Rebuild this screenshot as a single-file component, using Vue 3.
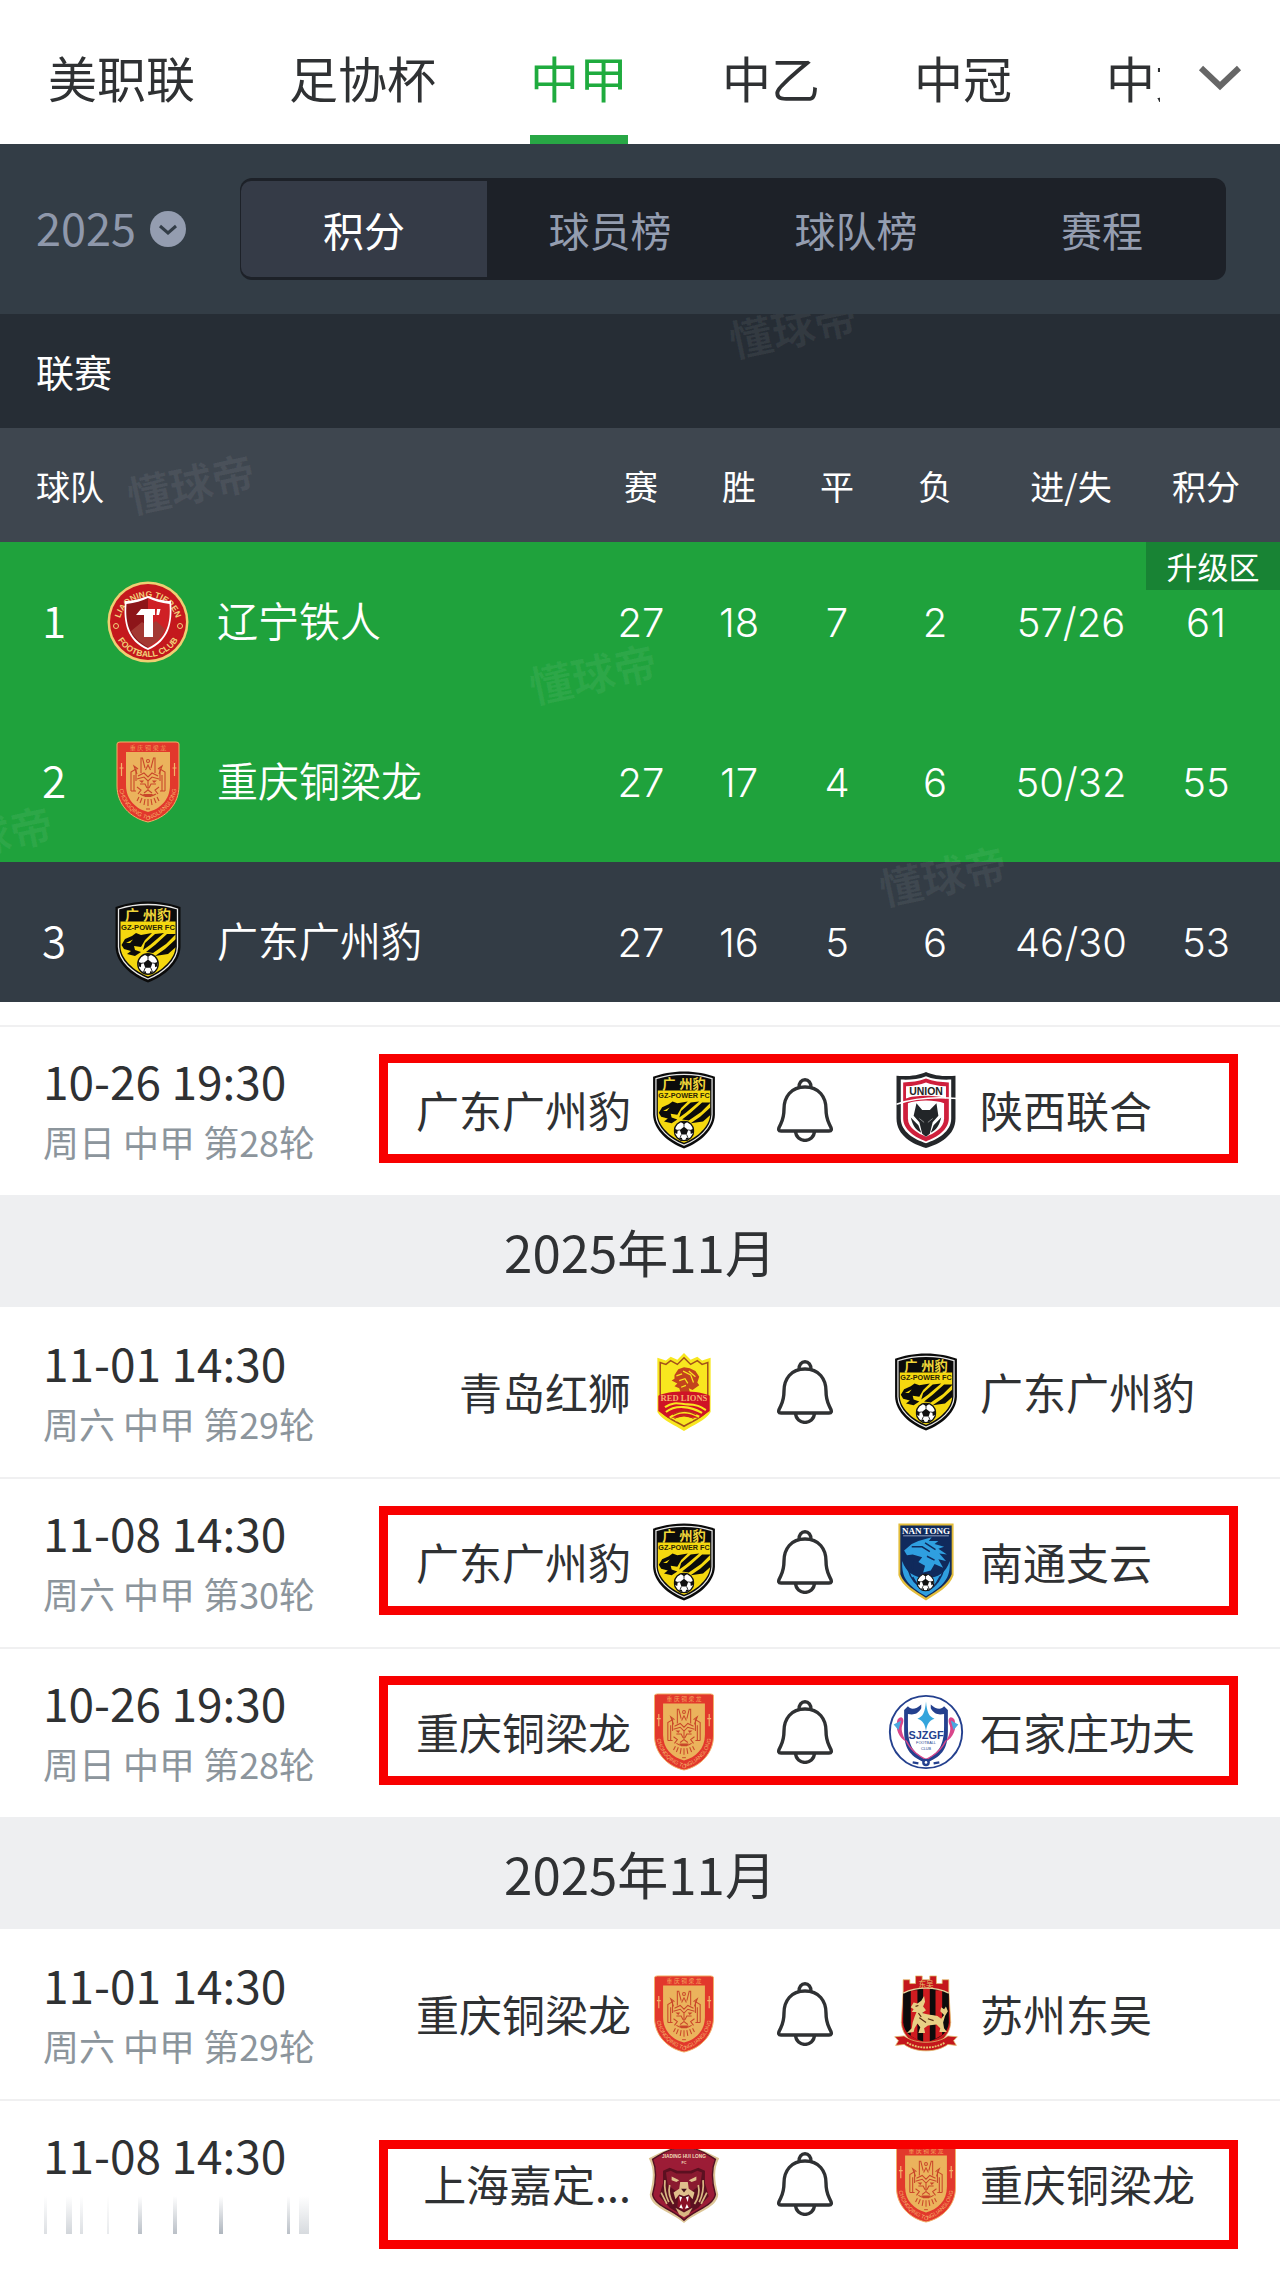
<script setup>
import { ref } from 'vue';

const leagues = ['美职联', '足协杯', '中甲', '中乙', '中冠', '中女'];
const activeLeague = ref('中甲');

const sections = ['积分', '球员榜', '球队榜', '赛程'];
const activeSection = ref('积分');

const season = ref('2025');

const standings = [
  { rank: 1, crest: 'liaoning', name: '辽宁铁人', played: 27, won: 18, drawn: 7, lost: 2, goals: '57/26', points: 61, promoted: true },
  { rank: 2, crest: 'chongqing', name: '重庆铜梁龙', played: 27, won: 17, drawn: 4, lost: 6, goals: '50/32', points: 55, promoted: true },
  { rank: 3, crest: 'guangzhou', name: '广东广州豹', played: 27, won: 16, drawn: 5, lost: 6, goals: '46/30', points: 53, promoted: false }
];

const groups = [
  {
    id: 'gz-10',
    matches: [
      { time: '10-26 19:30', info: '周日 中甲 第28轮', home: '广东广州豹', homeCrest: 'guangzhou', away: '陕西联合', awayCrest: 'shaanxi', marked: true }
    ]
  },
  {
    id: 'gz-11',
    month: '2025年11月',
    matches: [
      { time: '11-01 14:30', info: '周六 中甲 第29轮', home: '青岛红狮', homeCrest: 'qingdao', away: '广东广州豹', awayCrest: 'guangzhou' },
      { time: '11-08 14:30', info: '周六 中甲 第30轮', home: '广东广州豹', homeCrest: 'guangzhou', away: '南通支云', awayCrest: 'nantong', marked: true },
      { time: '10-26 19:30', info: '周日 中甲 第28轮', home: '重庆铜梁龙', homeCrest: 'chongqing', away: '石家庄功夫', awayCrest: 'shijiazhuang', marked: true }
    ]
  },
  {
    id: 'cq-11',
    month: '2025年11月',
    matches: [
      { time: '11-01 14:30', info: '周六 中甲 第29轮', home: '重庆铜梁龙', homeCrest: 'chongqing', away: '苏州东吴', awayCrest: 'suzhou' },
      { time: '11-08 14:30', info: '', home: '上海嘉定...', homeCrest: 'shanghai', away: '重庆铜梁龙', awayCrest: 'chongqing', marked: true, low: true }
    ]
  }
];

// streaks shown where the round info fades out
const streaks = [
  { x: 1, w: 3, o: 0.3 },
  { x: 23, w: 6, o: 0.4 },
  { x: 37, w: 3, o: 0.3 },
  { x: 64, w: 2, o: 0.2 },
  { x: 95, w: 4, o: 0.6 },
  { x: 130, w: 4, o: 0.6 },
  { x: 176, w: 4, o: 0.7 },
  { x: 244, w: 3, o: 0.6 },
  { x: 256, w: 10, o: 0.35 }
];
</script>

<template>
  <div class="page">
    <!-- Crest sprite -->
    <svg class="sprite" aria-hidden="true">
      <defs>
        <path id="arc-top" d="M12 45 A29 29 0 0 1 70 45" />
        <path id="arc-bottom" d="M6 41 A35 35 0 0 0 76 41" />
        <path id="arc-shield" d="M12 46 C15 66 28 74 41 79 C54 74 67 66 70 46" />
      </defs>

      <symbol id="ball" viewBox="0 0 20 20">
        <circle cx="10" cy="10" r="9.3" fill="#fff" stroke="#111" stroke-width="1.2" />
        <path d="M10 6 L14 9 L12.5 13.5 H7.5 L6 9Z M7 1.5 L10 3.5 L13 1.5 Q10 0 7 1.5Z M1 8 L4 9 L3.5 13 L1.5 12Z M19 8 L16 9 L16.5 13 L18.5 12Z M5 17 L8 16.5 L8.5 19Z M15 17 L12 16.5 L11.5 19Z" fill="#111" />
        <path d="M10 6 V3 M6 9 L3.5 9.5 M14 9 L16.5 9.5 M7.5 13.5 L6 17 M12.5 13.5 L14 17" stroke="#111" stroke-width="0.8" />
      </symbol>

      <symbol id="crest-liaoning" viewBox="0 0 82 82">
        <circle cx="41" cy="41" r="40.5" fill="#efcf72" />
        <circle cx="41" cy="41" r="38" fill="#c4181d" />
        <text class="crest-text" font-size="8.5" font-weight="700" fill="#f1d27a"><textPath href="#arc-top" startOffset="50%" text-anchor="middle">LIAONING TIEREN</textPath></text>
        <text class="crest-text" font-size="8.5" font-weight="700" fill="#f1d27a"><textPath href="#arc-bottom" startOffset="50%" text-anchor="middle">FOOTBALL CLUB</textPath></text>
        <circle cx="9" cy="45" r="2.5" fill="none" stroke="#f1d27a" />
        <circle cx="73" cy="45" r="2.5" fill="none" stroke="#f1d27a" />
        <path d="M41 15 C49 18 58 20 64 20 C66 42 62 60 41 69 C20 60 16 42 18 20 C24 20 33 18 41 15Z" fill="#fff" />
        <path d="M41 17 V67 C22 58 18 42 19.5 23 C28 22 35 20 41 17Z" fill="#8d1519" />
        <path d="M41 17 V67 C60 58 64 42 62.5 23 C54 22 47 20 41 17Z" fill="#cf2025" />
        <path d="M24 50 L35 41 L41 45 L49 40 L58 48 C54 58 48 62 41 66 C33 62 28 57 24 50Z" fill="#a43833" />
        <path d="M29 34 L34 28 H48 V34 H46 V56 H37 V34 H29Z M50 28 H53.5 L52 34 H49.5Z" fill="#fff" />
      </symbol>

      <symbol id="crest-chongqing" viewBox="0 0 82 82">
        <path d="M10 3 Q10 1 13 1 H69 Q72 1 72 3 V45 C72 63 59 77 41 81 C23 77 10 63 10 45Z" fill="#e2382c" stroke="#f2b066" stroke-width="1" />
        <path d="M19 11 H63 V44 C63 59 53 68 41 71 C29 68 19 59 19 44Z" fill="#ebb35c" />
        <text class="crest-text" x="41" y="8.5" font-size="6" text-anchor="middle" fill="#f2a35c">重 庆 铜 梁 龙</text>
        <text class="crest-text" font-size="5.8" fill="#f4b26a"><textPath href="#arc-shield" startOffset="50%" text-anchor="middle">CHONGQING TONGLIANGLONG</textPath></text>
        <g fill="none" stroke="#c9472a" stroke-width="1.1">
          <path d="M24 50 V31 L29 28 V40 M27 50 V34 M58 50 V31 L53 28 V40 M55 50 V34 M24 50 H29 M58 50 H53" />
          <path d="M34 32 V17 L35.5 17 L38 27 M48 32 V17 L46.5 17 L44 27 M38.5 29 L41 24 L43.500 29 M30 33 L27 25 L31 28 M52 33 L55 25 L51 28" />
          <path d="M31 35 L37 32 L41 36 L45 32 L51 35 M30 38 L37 36 L41 40 L45 36 L52 38 M33 43 H38 L40 47 M49 43 H44 L42 47 M41 40 V49 L37 52 M41 49 L45 52" />
          <path d="M30 46 L34 49 L31 53 M52 46 L48 49 L51 53 M33 53 C37 56 45 56 49 53 M32 56 L30 60 M35 57 L33 62 M38 58 L37 64 M41 58 V65 M44 58 L45 64 M47 57 L49 62 M50 56 L52 60" />
          <circle cx="41" cy="20" r="1.5" />
        </g>
        <path d="M36 53 H46 L44 56 H38Z M32 39.500 H37 L35 42Z M50 39.500 H45 L47 42Z" fill="#c9472a" />
        <path d="M39 68 H43" stroke="#c9472a" stroke-width="1" />
        <path d="M14.5 22 V35 M12.500 27 H16.500 M67.500 22 V35 M65.500 27 H69.500" stroke="#f4b26a" stroke-width="1.2" />
      </symbol>

      <symbol id="crest-guangzhou" viewBox="0 0 82 82">
        <path d="M41 0.5 C28 0.5 17 3 8.5 6 V46 C9 62 24 75 41 81.5 C58 75 73 62 73.5 46 V6 C65 3 54 0.5 41 0.5Z" fill="#0b0b0b" />
        <path d="M41 3.5 C29 3.5 19 5.5 11.5 8 V46 C12 60 26 72 41 78 C56 72 70 60 70.5 46 V8 C63 5.5 53 3.5 41 3.5Z" fill="none" stroke="#e8e8e8" stroke-width="1.3" />
        <path d="M13.5 20.5 H68.5 V46 C68 58 55 70 41 75.5 C27 70 14 58 13.5 46Z" fill="#f5d80f" />
        <text class="crest-text" x="41" y="18.5" font-size="14" font-weight="700" text-anchor="middle" fill="#f0d63a">广 州豹</text>
        <text class="crest-text" x="41" y="28.5" font-size="7.6" font-weight="700" text-anchor="middle" fill="#2b2505">GZ-POWER FC</text>
        <path d="M14.500 44 L18 38 L25 35 L29 32 L34 34 L45 32 L38 39 L34 46 L27 45 L28 49 L34 51 L28 55 L20 53 L24 50 L17 48Z" fill="#0b0b0b" />
        <path d="M48 33 L57 32 L43 44 L36 49 L38 42Z M60 33 L69 33 L59 43 L46 52 L39 51 L48 44Z M69 38 V46 L61 53 L48 55 L58 48Z" fill="#0b0b0b" />
        <path d="M19 42 L26 38.500 L23 42Z" fill="#f5d80f" />
        <use href="#ball" x="30" y="52" width="22" height="22" />
      </symbol>

      <symbol id="crest-shaanxi" viewBox="0 0 82 82">
        <path d="M41 1 C33 5 20 6 10 5 V50 C10 68 27 77 41 81 C55 77 72 68 72 50 V5 C62 6 49 5 41 1Z" fill="#24272a" />
        <path d="M41 5.5 C33 9 22 9.5 14.500 9 V50 C14.500 64 29 72 41 76 C53 72 67.500 64 67.500 50 V9 C60 9.500 49 9 41 5.5Z" fill="#fff" />
        <path d="M41 8 C34 11 25 12 17 12 V50 C17 62 30 70 41 74 C52 70 65 62 65 50 V12 C57 12 48 11 41 8Z" fill="#cf1f3c" />
        <path d="M20 16 C28 16 35 14 41 12 C47 14 54 16 62 16 V29 C54 25 28 25 20 29Z" fill="#fff" />
        <path d="M22 34 C31 30 51 30 60 34 V50 C60 60 49 66 41 69 C33 66 22 60 22 50Z" fill="#fff" />
        <path d="M10 35 C30 28 50 27 74 29" fill="none" stroke="#fff" stroke-width="1.5" />
        <text class="crest-text" x="41" y="25" font-size="11" font-weight="700" text-anchor="middle" fill="#222">UNION</text>
        <path d="M31 34 L37 41 H45 L52 34 L54 47 L48 54 L45 66 L41 69 L37 66 L34 54 L28 47Z M25 49 L33 57 L36 65 C30 62 27 57 25 49Z M57 49 L49 57 L46 65 C52 62 55 57 57 49Z" fill="#222528" />
        <path d="M34 50 L39 54 M48 50 L43 54" stroke="#8d8f91" stroke-width="1" />
      </symbol>

      <symbol id="crest-qingdao" viewBox="0 0 82 82">
        <path d="M41 0 L48 7 L55 4 L60 8 L69 5 V62 C64 71 50 76 41 82 C32 76 18 71 13 62 V5 L22 8 L27 4 L34 7Z" fill="#f8e71f" />
        <path d="M41 5 L48 12 L55 8 L60 12 L66 10 V60 C61 68 49 72 41 77 C33 72 21 68 16 60 V10 L22 12 L27 8 L34 12Z" fill="none" stroke="#a4521a" stroke-width="1.6" />
        <path d="M31 23 L35 17 L41 15 L47 16 L53 19 L57 25 L55 31 L57 34 L50 39 L46 37 L48 44 L42 41 L38 43 L36 37 L31 35 L34 32 L28 29 L31 27Z" fill="#c3441d" />
        <path d="M33 24 L39 22 M36 29 L42 27 L45 32 M40 19 L48 23 L51 31 M46 19 L53 25 M38 36 L43 34" fill="none" stroke="#f8e71f" stroke-width="1.3" />
        <path d="M14 45 C24 39 58 39 68 45 V61 L58 68 H24 L14 61Z" fill="#cf1326" />
        <text class="crest-text serif" x="41" y="50" font-size="9" font-weight="700" text-anchor="middle" fill="#f7b06e">RED LIONS</text>
        <path d="M21 57 C31 50 37 54 45 54 C55 54 59 57 64 60 M22 62 C32 54 48 56 60 63 M26 68 C36 60 48 62 57 67 M32 71 C38 67 44 67 50 71" fill="none" stroke="#f8e71f" stroke-width="2.2" />
        <path d="M29 65 C37 60 46 60 54 65 M31 69 C38 64 44 64 51 69" fill="none" stroke="#b5361b" stroke-width="1.2" />
      </symbol>

      <symbol id="crest-nantong" viewBox="0 0 82 82">
        <path d="M12 0.5 H70 V55 C66 67 53 74 41 81.5 C29 74 16 67 12 55Z" fill="#e3bd3b" />
        <path d="M14 2.5 H68 V54 C64 65 53 71 41 78.5 C29 71 18 65 14 54Z" fill="#102a5c" />
        <text class="crest-text serif" x="41" y="11.5" font-size="9.5" font-weight="700" text-anchor="middle" fill="#fff">NAN TONG</text>
        <path d="M17 13.5 H65" stroke="#b9c6dd" stroke-width="0.8" />
        <path d="M18 29 L26 22 L33 19 L47 15 L44 19 L54 19 L50 22 L60 25 L54 27 L63 33 L55 32 L62 40 L54 38 L59 47 L50 43 L46 50 L38 52 L40 45 L33 41 L37 36 L27 33 L21 34Z" fill="#2f9fe0" />
        <path d="M16 40 C20 52 28 57 41 58 C54 58 62 52 66 40 C67 58 60 66 41 77 C22 66 15 58 16 40Z" fill="#2f9fe0" />
        <path d="M26 25 L37 25 L45 30 M40 21 L51 28 M42 35 L50 39 M22 48 C25 60 32 67 41 71 M60 47 C57 60 50 67 43 71 M28 40 C24 48 29 54 36 56 M47 52 L56 48 M27 57 L33 67 M56 56 L51 65" fill="none" stroke="#102a5c" stroke-width="1.6" />
        <use href="#ball" x="31" y="53" width="19" height="19" />
      </symbol>

      <symbol id="crest-shijiazhuang" viewBox="0 0 82 82">
        <circle cx="41" cy="41" r="38" fill="#fff" stroke="#24408e" stroke-width="2" />
        <path d="M18 18 L22 14 C25 18 31 17 36 12 L36 16 C32 23 27 23 22 22 V35 C22 56 28 63 41 70 C54 63 60 56 60 35 V22 C55 23 50 23 46 16 L46 12 C51 17 57 18 60 14 L64 18 V40 C64 61 56 67 41 74 C26 67 18 61 18 40Z" fill="#24408e" />
        <path d="M41 9 C42 20 44 25 50 27 C44 29 42 33 41 40 C40 33 38 29 32 27 C38 25 40 20 41 9Z" fill="#34a5dc" />
        <path d="M11 28 C16 22 19 28 16 34 C14 40 18 47 20 51 C13 47 8 38 11 28Z M71 28 C66 22 63 28 66 34 C68 40 64 47 62 51 C69 47 74 38 71 28Z" fill="#d9468b" />
        <path d="M7 33 L15 29 L12 39Z M75 33 L67 29 L70 39Z" fill="#4aa8df" />
        <path d="M20 50 C25 61 34 66 41 70 C48 66 57 61 62 50" fill="none" stroke="#d9468b" stroke-width="1.4" />
        <text class="crest-text" x="41" y="48" font-size="11.5" font-weight="700" text-anchor="middle" fill="#24408e">SJZGF</text>
        <text class="crest-text" x="41" y="54" font-size="4" text-anchor="middle" fill="#24408e">FOOTBALL</text>
        <text class="crest-text" x="41" y="60" font-size="4" text-anchor="middle" fill="#24408e">CLUB</text>
        <circle cx="41" cy="73" r="4" fill="#24408e" />
        <path d="M27 73 L33 74 M49 74 L55 73" stroke="#24408e" stroke-width="2.4" />
        <circle cx="41" cy="73" r="1.4" fill="#fff" />
      </symbol>

      <symbol id="crest-suzhou" viewBox="0 0 82 82">
        <path d="M17 17 V5 H24 V9 H30 V1 H37 V5 H45 V1 H52 V9 H58 V5 H65 V17 L67 50 C66 65 54 73 41 79 C28 73 16 65 15 50Z" fill="#c4161c" stroke="#e2c06d" stroke-width="0.8" />
        <path d="M17 19 C31 12 51 12 65 19 V50 C64 63 53 67 41 71 C29 67 18 63 17 50Z" fill="#0d0b0b" />
        <path d="M25 16 H32 V68 L25 64Z M38 14 H45 V71 H38Z M51 16 H58 V63 L51 67Z" fill="#d01c20" />
        <path d="M17 19 C31 12 51 12 65 19" fill="none" stroke="#e8d39b" stroke-width="1.3" />
        <text class="crest-text" x="41" y="13" font-size="8" text-anchor="middle" fill="#e8c56f">东吴</text>
        <path d="M25 34 L28 29 L32 30 L36 27 L39 22 L40 28 L38 33 L41 37 L37 40 C42 42 48 42 53 43 L57 46 L60 42 L56 38 L57 34 L60 36 L62 33 L64 38 L61 43 L59 50 L60 56 L63 60 H55 L56 56 L52 52 L43 53 L39 56 L40 61 H33 L35 55 L32 51 L29 56 L28 60 L21 61 L26 56 L27 50 L29 44 L31 39 L26 39 L28 36Z" fill="#e8cf85" />
        <path d="M30 33 L33 32 M33 40 L36 44 M34 45 L41 50 M43 46 L49 48" stroke="#5a2b12" stroke-width="1.2" />
        <path d="M8 65 L18 64 C30 73 52 73 64 64 L74 65 L70 69 L73 74 L64 73 C52 82 30 82 18 73 L9 74 L12 69Z" fill="#c4161c" stroke="#e2c06d" stroke-width="0.8" />
        <path d="M21 71 C32 78 50 78 61 71" fill="none" stroke="#e8c56f" stroke-width="2" stroke-dasharray="2 1" />
      </symbol>

      <symbol id="crest-shanghai" viewBox="0 0 82 82">
        <path d="M41 1 C32 1 20 6 12 10 L4 14 C10 26 9 36 5 52 C6 66 27 70 41 82 C55 70 76 66 77 52 C73 36 72 26 78 14 L70 10 C62 6 50 1 41 1Z" fill="#dcc596" />
        <path d="M41 2 C32 2 21 7 13 12 L8 15 C13 27 12 38 8 52 C10 64 29 68 41 79 C53 68 72 64 74 52 C70 38 69 27 74 15 L69 12 C61 7 50 2 41 2Z" fill="#9c1c36" stroke="#521022" stroke-width="1.5" />
        <text class="crest-text" x="41" y="14" font-size="5" font-weight="700" text-anchor="middle" fill="#f1dcb9">JIADING HUI LONG</text>
        <text class="crest-text" x="41" y="20" font-size="4" font-weight="700" text-anchor="middle" fill="#f1dcb9">FC</text>
        <path d="M19 27 L26 24 L34 27 H48 L56 24 L63 27 L63 40 L67 54 L56 66 L41 75 L26 66 L15 54 L19 40Z" fill="#5b1020" />
        <path d="M22 29 L27 27 L33 30 H49 L55 27 L60 29 L58 42 L50 48 H32 L24 42Z" fill="#8a1a30" />
        <path d="M28 33 L36 37 L33 39 L28 37Z M54 33 L46 37 L49 39 L54 37Z M37 39 H45 L46 46 L52 50 L50 57 L46 52 L41 54 L36 52 L32 57 L30 50 L36 46Z" fill="#e0c08c" />
        <path d="M21 37 C20 46 21 52 25 60 M26 42 C24 50 26 56 30 62 M61 37 C62 46 61 52 57 60 M56 42 C58 50 56 56 52 62 M17 50 L23 62 M65 50 L59 62" fill="none" stroke="#d9b783" stroke-width="1.8" />
        <path d="M35 54 L41 56 L47 54 L48 65 L41 69 L34 65Z" fill="#8a1027" />
        <path d="M38 46 H44 L41 50Z" fill="#42101b" />
        <path d="M36 54 L37 60 L39 55Z M46 54 L45 60 L43 55Z M36 66 L38 62 L40 67Z M46 66 L44 62 L42 67Z" fill="#fff" />
        <path d="M32 66 L41 71 L50 66 L46 73 L41 76 L36 73Z" fill="#d9b783" />
      </symbol>

      <symbol id="icon-bell" viewBox="0 0 56 64">
        <g fill="none" stroke="#2f3133" stroke-width="3.4" stroke-linejoin="round">
          <path d="M28 9 C14 9 7 19 7 31 C7 41 5 43 2.5 48.5 C1 51.5 1.5 53 4 53 H52 C54.5 53 55 51.5 53.5 48.5 C51 43 49 41 49 31 C49 19 42 9 28 9Z" />
          <path d="M22 10 C21 -1 35 -1 34 10" />
          <path d="M18.5 53 C19 65.5 37 65.5 37.5 53" />
        </g>
      </symbol>
    </svg>

    <nav class="league-nav">
      <div class="league-tabs">
        <button
          v-for="league in leagues"
          :key="league"
          type="button"
          class="league-tab"
          :class="{ 'is-active': league === activeLeague }"
          @click="activeLeague = league"
        >{{ league }}</button>
      </div>
      <button type="button" class="more-button" aria-label="更多">
        <svg width="44" height="28" viewBox="0 0 44 28" fill="none" stroke="#666" stroke-width="6">
          <path d="M3 4 L22 22 L41 4" />
        </svg>
      </button>
    </nav>

    <div class="filter-bar">
      <label class="season">
        <select v-model="season" aria-label="赛季">
          <option>2025</option>
        </select>
        <svg width="36" height="36" viewBox="0 0 36 36">
          <circle cx="18" cy="18" r="18" fill="#949db0" />
          <path d="M10 15 L18 22 L26 15" fill="none" stroke="#333d47" stroke-width="3" />
        </svg>
      </label>
      <div class="segments">
        <button
          v-for="section in sections"
          :key="section"
          type="button"
          class="segment"
          :class="{ 'is-active': section === activeSection }"
          @click="activeSection = section"
        >{{ section }}</button>
      </div>
    </div>

    <section class="standings">
      <h2 class="stage">联赛</h2>
      <table class="table">
        <colgroup>
          <col>
          <col class="col-num">
          <col class="col-num">
          <col class="col-num">
          <col class="col-num">
          <col class="col-goals">
          <col class="col-points">
        </colgroup>
        <thead>
          <tr>
            <th class="team-head">球队</th>
            <th>赛</th>
            <th>胜</th>
            <th>平</th>
            <th>负</th>
            <th>进/失</th>
            <th class="points">积分</th>
          </tr>
        </thead>
        <tbody>
          <tr v-for="row in standings" :key="row.rank" :class="{ promoted: row.promoted }">
            <td>
              <div class="team">
                <span class="rank">{{ row.rank }}</span>
                <svg class="team-crest"><use :href="'#crest-' + row.crest" /></svg>
                <span class="team-name">{{ row.name }}</span>
              </div>
            </td>
            <td>{{ row.played }}</td>
            <td>{{ row.won }}</td>
            <td>{{ row.drawn }}</td>
            <td>{{ row.lost }}</td>
            <td>{{ row.goals }}</td>
            <td class="points">{{ row.points }}</td>
          </tr>
        </tbody>
      </table>
      <span class="zone-tag">升级区</span>
      <div class="watermarks" aria-hidden="true">
        <span class="mark-a">懂球帝</span>
        <span class="mark-b">懂球帝</span>
        <span class="mark-c">懂球帝</span>
        <span class="mark-d">懂球帝</span>
        <span class="mark-e">懂球帝</span>
      </div>
    </section>

    <main class="schedule">
      <section v-for="group in groups" :key="group.id">
        <h3 v-if="group.month" class="month">{{ group.month }}</h3>
        <div v-for="match in group.matches" :key="match.time + match.home" class="match">
          <div class="kickoff">
            <div class="time">{{ match.time }}</div>
            <div v-if="match.info" class="info">{{ match.info }}</div>
            <svg v-else class="streaks" width="270" height="38">
              <linearGradient id="streak" x1="0" y1="0" x2="0" y2="1">
                <stop offset="0" stop-color="#8c96a2" stop-opacity="0" />
                <stop offset="1" stop-color="#8c96a2" />
              </linearGradient>
              <rect v-for="s in streaks" :key="s.x" :x="s.x" y="0" :width="s.w" height="38" fill="url(#streak)" :opacity="s.o" />
            </svg>
          </div>
          <span class="home">{{ match.home }}</span>
          <svg class="crest"><use :href="'#crest-' + match.homeCrest" /></svg>
          <button type="button" class="bell" aria-label="提醒">
            <svg width="56" height="64"><use href="#icon-bell" /></svg>
          </button>
          <svg class="crest"><use :href="'#crest-' + match.awayCrest" /></svg>
          <span class="away">{{ match.away }}</span>
          <div v-if="match.marked" class="highlight" :class="{ 'is-low': match.low }"></div>
        </div>
      </section>
    </main>
  </div>
</template>

<style>
body {
  margin: 0;
  background: #fff;
}
</style>

<style scoped>
.page {
  font-family: "Noto Sans CJK SC", sans-serif;
  color: #2f3133;
  overflow: hidden;
}

button,
select {
  font: inherit;
  color: inherit;
  background: none;
  border: none;
  padding: 0;
  margin: 0;
  cursor: pointer;
}

.sprite {
  display: none;
}

.crest-text {
  font-family: "Liberation Sans", "Noto Sans CJK SC", sans-serif;
}

.crest-text.serif {
  font-family: "Liberation Serif", serif;
}

/* League tabs */
.league-nav {
  display: flex;
  height: 144px;
}

.league-tabs {
  flex: 1;
  min-width: 0;
  display: flex;
  gap: 94px;
  padding-left: 48px;
  overflow: hidden;
}

.league-tab {
  position: relative;
  flex: none;
  padding-top: 8px;
  font-size: 49px;
  white-space: nowrap;
}

.league-tab.is-active {
  color: #1fab3e;
}

.league-tab.is-active::after {
  content: "";
  position: absolute;
  left: 0;
  right: 0;
  bottom: 0;
  height: 9px;
  background: #28a745;
}

.more-button {
  width: 120px;
  padding-top: 16px;
}

/* Season and section filter */
.filter-bar {
  display: flex;
  align-items: center;
  height: 170px;
  padding: 0 54px 0 36px;
  background: #333d46;
}

.season {
  display: flex;
  align-items: center;
  gap: 14px;
  width: 204px;
  color: #8f98ab;
  font-size: 45px;
}

.season select {
  appearance: none;
  padding-bottom: 6px;
}

.segments {
  flex: 1;
  display: flex;
  height: 96px;
  padding: 3px 1px;
  border-radius: 12px;
  background: #1d2128;
}

.segment {
  flex: 1;
  font-size: 41px;
  color: #949db0;
}

.segment.is-active {
  color: #fff;
  background: #353b47;
  border-radius: 10px 0 0 10px;
}

/* Standings */
.standings {
  position: relative;
  overflow: hidden;
  color: #fff;
  background: #333c45;
}

.stage {
  margin: 0;
  padding-left: 36px;
  font-size: 38px;
  font-weight: 400;
  line-height: 114px;
  background: #262d35;
}

.table {
  width: 100%;
  table-layout: fixed;
  border-collapse: collapse;
}

.col-num {
  width: 98px;
}

.col-goals {
  width: 174px;
}

.col-points {
  width: 122px;
}

.table th,
.table td {
  padding: 0;
  text-align: center;
}

.table th {
  height: 114px;
  font-size: 34px;
  font-weight: 400;
  background: #3e464f;
}

.table .team-head {
  padding-left: 36px;
  text-align: left;
}

.table td {
  height: 160px;
  font-family: Inter, sans-serif;
  font-size: 40px;
  font-weight: 300;
}

.table tr:last-child td {
  height: 120px;
  padding-top: 20px;
}

.table .points {
  padding-right: 26px;
}

.promoted {
  background: #1fa23c;
}

.team {
  display: flex;
  align-items: center;
  padding-left: 42px;
  font-family: "Noto Sans CJK SC", sans-serif;
  font-size: 41px;
  font-weight: 350;
}

.rank,
.team-name {
  padding-bottom: 6px;
}

.rank {
  width: 65px;
  text-align: left;
  font-size: 44px;
}

.team-crest {
  width: 82px;
  height: 82px;
  margin-right: 28px;
}

.zone-tag {
  position: absolute;
  top: 228px;
  right: 0;
  width: 134px;
  font-size: 31px;
  line-height: 48px;
  text-align: center;
  background: #188334;
}

.watermarks {
  position: absolute;
  inset: 0;
  pointer-events: none;
}

.watermarks span {
  position: absolute;
  font-size: 43px;
  font-weight: 700;
  line-height: 48px;
  color: rgba(255, 255, 255, 0.06);
  transform: rotate(-12deg);
}

.mark-a {
  left: 728px;
  top: -12px;
}

.mark-b {
  left: 126px;
  top: 144px;
}

.mark-c {
  left: 528px;
  top: 334px;
}

.mark-d {
  left: -76px;
  top: 496px;
}

.mark-e {
  left: 878px;
  top: 536px;
}

/* Schedule */
.schedule {
  padding-top: 23px;
}

.month {
  margin: 0;
  font-size: 51px;
  font-weight: 400;
  line-height: 112px;
  text-align: center;
  background: #eeeff1;
}

.match {
  position: relative;
  box-sizing: border-box;
  display: grid;
  grid-template-columns: 300px 1fr 78px auto 78px 1fr;
  align-items: center;
  min-height: 170px;
  padding: 0 13px 2px 43px;
  border-top: 2px solid #f0f0f1;
}

.month + .match {
  border-top-color: transparent;
}

.time {
  font-size: 46px;
  line-height: 62px;
}

.info {
  font-size: 36px;
  line-height: 60px;
  color: #8c959c;
}

.streaks {
  display: block;
  margin: 11px 0;
}

.home,
.away {
  padding-bottom: 2px;
  font-size: 43px;
  white-space: nowrap;
}

.home {
  padding-right: 14px;
  text-align: right;
}

.away {
  padding-left: 15px;
}

.crest {
  width: 78px;
  height: 78px;
}

.bell {
  display: flex;
  margin: 0 54px;
}

/* Red frame drawn over a fixture */
.highlight {
  position: absolute;
  top: 27px;
  left: 379px;
  right: 42px;
  height: 91px;
  border: 9px solid #f80000;
  pointer-events: none;
}

.highlight.is-low {
  top: 39px;
}
</style>
